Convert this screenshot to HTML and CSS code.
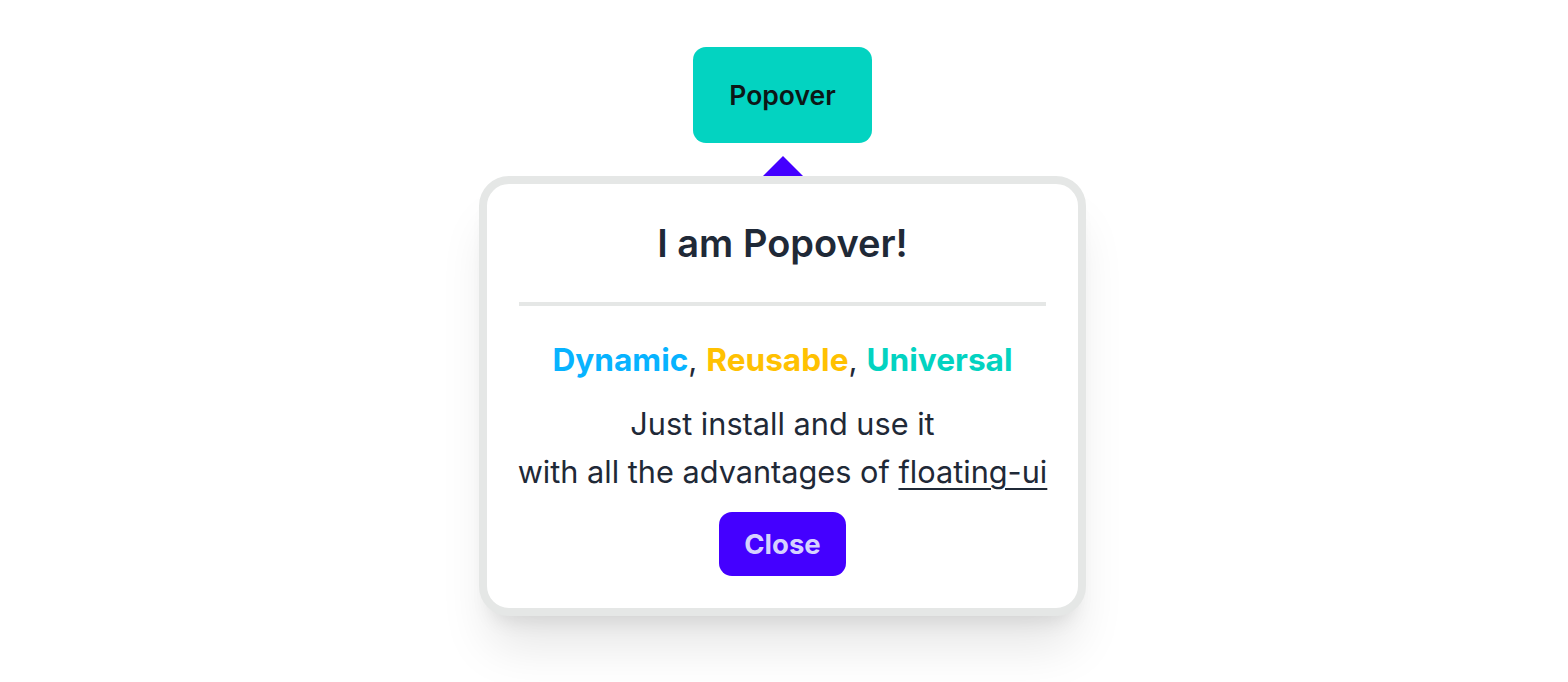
FILE: index.html
```html
<!DOCTYPE html>
<html lang="en">
<head>
<meta charset="utf-8">
<title>Popover</title>
<link rel="stylesheet" href="styles.css">
</head>
<body>
<main class="stage">
  <button class="trigger" type="button">Popover</button>
  <div class="popover-wrap">
    <div class="arrow"></div>
    <section class="popover">
      <h2 class="popover-title">I am Popover!</h2>
      <hr class="divider">
      <p class="tagline"><span class="c-sky">Dynamic</span>, <span class="c-amber">Reusable</span>, <span class="c-teal">Universal</span></p>
      <p class="desc">Just install and use it<br>with all the advantages of <a href="#" class="link">floating-ui</a></p>
      <button class="close" type="button">Close</button>
    </section>
  </div>
</main>
</body>
</html>
```
FILE: styles.css
```css
* { box-sizing: border-box; }
html, body { margin: 0; padding: 0; background: #ffffff; }
body {
  font-family: Inter, "Noto Sans", "Liberation Sans", sans-serif;
  color: #1f2937;
}
.stage {
  min-height: 100vh;
  display: flex;
  flex-direction: column;
  align-items: center;
  padding-top: 47px;
  padding-right: 3px;
  padding-bottom: 40px;
}
.trigger {
  width: 179px;
  height: 96px;
  border: 0;
  border-radius: 13px;
  background: #03d3c1;
  color: #0c1717;
  font-family: inherit;
  font-size: 26.5px;
  font-weight: 600;
  line-height: 32px;
  padding: 0;
}
.popover-wrap {
  margin-top: 13px;
  display: flex;
  flex-direction: column;
  align-items: center;
}
.arrow {
  width: 0;
  height: 0;
  border-left: 20px solid transparent;
  border-right: 20px solid transparent;
  border-bottom: 20px solid #4400ff;
}
.popover {
  width: 607px;
  border: 8px solid #e5e7e6;
  border-radius: 30px;
  background: #ffffff;
  padding: 32px;
  display: flex;
  flex-direction: column;
  align-items: center;
  text-align: center;
  box-shadow: 0 40px 50px -10px rgba(0,0,0,0.1), 0 16px 20px -12px rgba(0,0,0,0.1);
}
.popover-title {
  margin: 0;
  font-size: 38px;
  font-weight: 600;
  line-height: 54px;
  color: #1f2937;
}
.divider {
  width: 100%;
  margin: 32px 0 30px;
  border: 0;
  height: 4px;
  background: #e5e7e6;
}
.tagline {
  margin: 0;
  font-size: 31.6px;
  font-weight: 400;
  line-height: 48px;
  color: #1f2937;
}
.tagline span { font-weight: 700; }
.c-sky { color: #07b3ff; }
.c-amber { color: #ffc101; }
.c-teal { color: #03d3c1; }
.desc {
  margin: 16px 0 0;
  font-size: 30.7px;
  font-weight: 400;
  line-height: 48px;
  color: #1f2937;
  white-space: nowrap;
}
.link {
  color: #1f2937;
  text-decoration: underline;
  text-decoration-thickness: 2px;
  text-underline-offset: 5px;
}
.close {
  margin-top: 16px;
  width: 127px;
  height: 64px;
  border: 0;
  border-radius: 13px;
  background: #4400ff;
  color: #d6d1ff;
  font-family: inherit;
  font-size: 27.5px;
  font-weight: 700;
  line-height: 40px;
  padding: 0;
}
```
